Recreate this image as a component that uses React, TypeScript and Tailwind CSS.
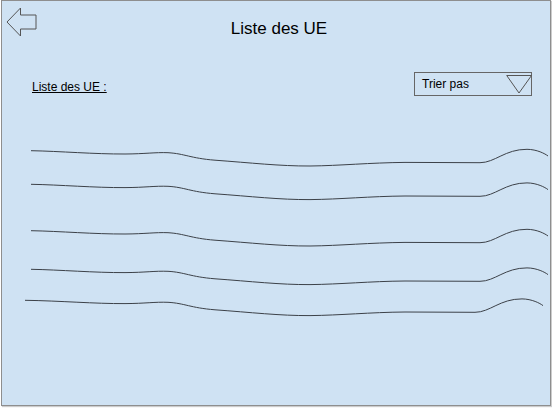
const font = { fontFamily: '"Liberation Sans", Arial, sans-serif' }

// one hand-drawn line; y0 = start height, x0 = start, s = shift of the right-hand curl
function wave(x0: number, y0: number, s: number) {
  const y = (d: number) => (y0 + d).toFixed(1)
  return [
    `M${x0},${y(0)}`,
    `C60,${y(0.5)} 95,${y(3.5)} 125,${y(3.3)}`,
    `C145,${y(3.2)} 155,${y(1.5)} 168,${y(2)}`,
    `C185,${y(3)} 190,${y(7.5)} 215,${y(9.5)}`,
    `C250,${y(12)} 280,${y(15.5)} 310,${y(15.3)}`,
    `C340,${y(15)} 370,${y(12)} 405,${y(11.7)}`,
    `L${480 + s},${y(12)}`,
    `C${495 + s},${y(12)} ${505 + s},${y(-1.5)} ${527 + s},${y(-1.4)}`,
    `C${537 + s},${y(-1.3)} ${545 + s},${y(3)} ${548 + s},${y(5.3)}`,
  ].join(' ')
}

const lines: [number, number, number][] = [
  [31, 150.7, 0],
  [31, 184.3, 0],
  [31, 230.7, 0],
  [31, 269.3, 0],
  [25, 300.3, -5],
]

export default function App() {
  return (
    <div className="w-[552px] h-[408px] bg-white" style={font}>
      <div className="ml-[1px] w-[550px] h-[406px] border border-[#8e8e8e] bg-[#cfe2f3] shadow-[1px_1px_1px_rgba(0,0,0,0.2)] flex flex-col">
        <div className="flex h-[71px] shrink-0">
          <svg className="ml-[4px] mt-[6px] w-[32px] h-[30px] shrink-0" viewBox="6 7 32 30">
            <polygon
              points="7,22 20.5,8 20.5,15 36,15 36,29 20.5,29 20.5,36"
              fill="none"
              stroke="#555"
              strokeWidth="1"
            />
          </svg>
          <div className="flex-1 pr-[30px] mt-[18px] text-center text-[17px] leading-[20px] text-black">
            Liste des UE
          </div>
        </div>

        <div className="flex justify-between items-start pl-[30px] pr-[18px]">
          <span className="mt-[8px] text-[12px] leading-[14px] text-black underline">Liste des UE :</span>
          <div className="w-[118px] h-[24px] border border-[#666] flex">
            <span className="flex-1 self-center pl-[7px] text-[12px] leading-[14px] text-black">Trier pas</span>
            <svg className="w-[25px] h-[22px] shrink-0 overflow-visible" viewBox="0 0 25 22">
              <polygon points="0.7,2.5 25.5,2.5 13,20" fill="none" stroke="#555" strokeWidth="1" />
            </svg>
          </div>
        </div>

        <svg className="block w-[548px] h-[308px]" viewBox="2 96 548 308">
          {lines.map(([x0, y0, s], i) => (
            <path key={i} d={wave(x0, y0, s)} fill="none" stroke="#3c4148" strokeWidth="1" />
          ))}
        </svg>
      </div>
    </div>
  )
}
